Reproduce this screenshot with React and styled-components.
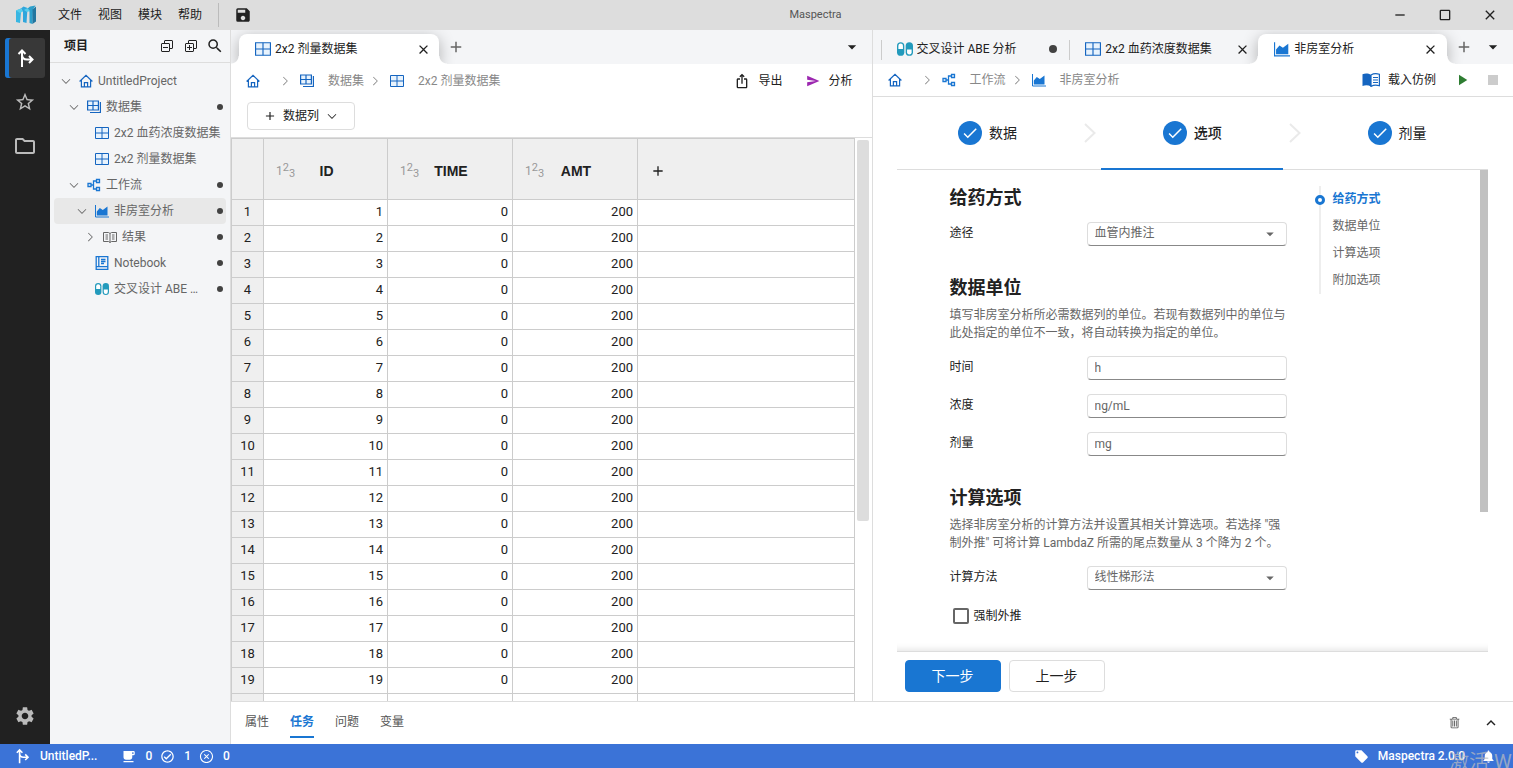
import React, { useState } from 'react';
import styled, { createGlobalStyle } from 'styled-components';
import {
  MdSave, MdStarBorder, MdOutlineFolder, MdSettings, MdSearch, MdClose, MdAdd, MdArrowDropDown,
  MdIosShare, MdPlayArrow, MdStop, MdCheck, MdLocalCafe, MdLocalOffer, MdNotifications,
  MdKeyboardArrowUp, MdRemove, MdCropSquare, MdSend, MdOutlineCheckCircle,
} from 'react-icons/md';
import { VscCollapseAll, VscExpandAll, VscChevronDown, VscChevronRight, VscTrash } from 'react-icons/vsc';
import { AiOutlineCloseCircle } from 'react-icons/ai';

const primary = '#1976d2';
const iconBlue = '#1565c0';
const textColor = '#212121';
const mutedColor = '#666';
const lineColor = '#ddd';
const panelColor = '#f4f5f7';

const GlobalStyle = createGlobalStyle`
*, *::before, *::after {
box-sizing: border-box;
}
body {
margin: 0;
overflow: hidden;
font-family: Roboto, "Noto Sans CJK SC", sans-serif;
font-size: 12px;
line-height: 18px;
color: ${textColor};
background-color: white;
}
button, input, select {
font: inherit;
color: inherit;
}
svg {
display: block;
flex: none;
}
a {
color: inherit;
text-decoration: none;
}
`;
const Page = styled.div`
height: 100vh;
display: flex;
flex-direction: column;
`;
const IconButton = styled.button`
display: flex;
align-items: center;
justify-content: center;
flex: none;
width: ${(p) => p.$w || 24}px;
height: 24px;
padding: 0;
border: 0;
background: none;
color: ${(p) => p.$color || textColor};
`;
const Spacer = styled.div`
flex: 1;
`;

const TitleBar = styled.header`
display: grid;
grid-template-columns: 1fr auto 1fr;
align-items: center;
height: 30px;
flex: none;
background-color: #ddd;
`;
const TitleLeft = styled.div`
display: flex;
align-items: center;
height: 30px;
padding-left: 15px;
`;
const MenuList = styled.nav`
display: flex;
gap: 16px;
margin: 0 16px 0 21px;
`;
const MenuButton = styled.button`
padding: 0;
border: 0;
background: none;
`;
const TitleDivider = styled.div`
width: 1px;
height: 24px;
margin-right: 12px;
background-color: #bbb;
`;
const AppTitle = styled.div`
color: #555;
font-size: 11px;
padding-left: 118px;
`;
const WindowControls = styled.div`
display: flex;
justify-content: flex-end;
gap: 21px;
padding-right: 11px;
`;

const Body = styled.div`
flex: 1;
min-height: 0;
display: flex;
`;
const Rail = styled.nav`
width: 50px;
flex: none;
display: flex;
flex-direction: column;
align-items: center;
gap: 4px;
padding: 8px 0;
background-color: #212121;
`;
const RailButton = styled.button`
width: 40px;
height: 40px;
display: flex;
align-items: center;
justify-content: center;
border: 0;
border-radius: 3px;
padding: 0;
color: ${(p) => (p.$active ? 'white' : '#bbb')};
background-color: ${(p) => (p.$active ? '#383838' : 'transparent')};
box-shadow: ${(p) => (p.$active ? `inset 4px 0 0 ${primary}` : 'none')};
`;
const Sidebar = styled.aside`
width: 181px;
flex: none;
background-color: ${panelColor};
border-right: 1px solid ${lineColor};
`;
const SidebarHeader = styled.div`
display: flex;
align-items: center;
height: 33px;
padding: 0 3px 0 14px;
border-bottom: 1px solid ${lineColor};
`;
const SidebarTitle = styled.h2`
flex: 1;
margin: 0;
font-size: 12px;
font-weight: 700;
`;
const Tree = styled.ul`
list-style: none;
margin: 0;
padding: 5px 4px;
`;
const TreeRow = styled.li`
display: flex;
align-items: center;
gap: 5px;
height: 26px;
padding: 0 3px 0 ${(p) => 4 + p.$level * 8}px;
border-radius: 4px;
color: ${mutedColor};
background-color: ${(p) => (p.$selected ? '#e8e8e8' : 'transparent')};
`;
const TreeToggle = styled.span`
width: 16px;
flex: none;
display: flex;
justify-content: center;
`;
const TreeLabel = styled.span`
flex: 1;
min-width: 0;
padding-right: ${(p) => (p.$cut ? 4 : 0)}px;
overflow: hidden;
text-overflow: ${(p) => (p.$cut ? 'ellipsis' : 'clip')};
white-space: nowrap;
`;
const Dot = styled.span`
width: ${(p) => p.$size || 6}px;
height: ${(p) => p.$size || 6}px;
flex: none;
border-radius: 50%;
background-color: #424242;
`;

const Work = styled.div`
flex: 1;
min-width: 0;
display: flex;
flex-direction: column;
`;
const Panes = styled.div`
flex: 1;
min-height: 0;
display: flex;
`;
const Pane = styled.section`
flex: 1;
min-width: 0;
display: flex;
flex-direction: column;
border-right: ${(p) => (p.$divided ? `1px solid ${lineColor}` : 'none')};
`;
const TabBar = styled.div`
display: flex;
align-items: flex-end;
height: 34px;
flex: none;
padding: 0 8px;
overflow: hidden;
background-color: ${panelColor};
`;
const TabItem = styled.div`
position: relative;
display: flex;
align-items: center;
gap: 4px;
flex: 0 1 200px;
min-width: 0;
height: 30px;
padding: 0 4px 0 16px;
border-radius: 8px 8px 0 0;
${(p) => (p.$active ? `
background-color: white;
box-shadow: 0 4px 16px rgba(0, 0, 0, 0.3);
&::before, &::after {
content: "";
position: absolute;
bottom: 0;
width: 8px;
height: 8px;
}
&::before {
left: -8px;
background: radial-gradient(circle at 0 0, transparent 7px, white 8px);
}
&::after {
right: -8px;
background: radial-gradient(circle at 100% 0, transparent 7px, white 8px);
}
` : `
&::before {
content: "";
position: absolute;
left: 0;
top: 6px;
width: 1px;
height: 20px;
background-color: #ccc;
}
`)}
`;
const TabLabel = styled.span`
flex: 1;
white-space: nowrap;
overflow: hidden;
`;
const TabMark = styled.span`
width: 24px;
flex: none;
display: flex;
justify-content: center;
`;
const TabActions = styled.div`
display: flex;
align-items: center;
align-self: center;
`;

const ToolRow = styled.div`
display: flex;
align-items: center;
height: 33px;
flex: none;
padding: 0 ${(p) => (p.$line ? 8 : 12)}px 0 15px;
border-bottom: ${(p) => (p.$line ? `1px solid ${lineColor}` : 'none')};
`;
const Crumbs = styled.nav`
display: flex;
align-items: center;
color: #888;
`;
const Crumb = styled.a`
display: flex;
align-items: center;
gap: 14px;
`;
const CrumbArrow = styled.span`
color: #888;
margin: 0 8px 0 ${(p) => (p.$first ? 18 : 4)}px;
`;
const ToolButton = styled.button`
display: flex;
align-items: center;
gap: 8px;
padding: 0;
margin: 0 7px 0 17px;
border: 0;
background: none;
`;
const ColumnBar = styled.div`
height: 41px;
flex: none;
padding: 5px 16px;
border-bottom: 1px solid ${lineColor};
`;
const ColumnButton = styled.button`
display: flex;
align-items: center;
justify-content: center;
gap: 6px;
width: 108px;
height: 28px;
border: 1px solid ${lineColor};
border-radius: 4px;
background-color: white;
`;

const GridArea = styled.div`
flex: 1;
min-height: 0;
display: flex;
overflow: hidden;
`;
const GridScroll = styled.div`
flex: 1;
min-width: 0;
overflow: hidden;
`;
const DataTable = styled.table`
width: 100%;
table-layout: fixed;
border-collapse: collapse;
font-size: 13px;
`;
const HeadCell = styled.th`
width: ${(p) => (p.$w ? `${p.$w}px` : 'auto')};
height: 61px;
padding: 4px 12px 0;
border: 1px solid #ccc;
background-color: #efefef;
font-family: "Liberation Sans", Arial, sans-serif;
font-size: 14px;
font-weight: 700;
text-align: left;
`;
const HeadContent = styled.div`
display: flex;
align-items: center;
`;
const HeadName = styled.span`
flex: 1;
padding-right: 16px;
text-align: center;
`;
const NumberType = styled.span`
color: #999;
font-family: Roboto, sans-serif;
font-size: 12px;
font-weight: 400;
line-height: 18px;
width: 18px;
white-space: nowrap;
`;
const Raised = styled.sup`
font-size: 11px;
line-height: 0;
vertical-align: 4px;
`;
const Lowered = styled.sub`
font-size: 11px;
line-height: 0;
vertical-align: -2px;
`;
const RowHead = styled.th`
height: 26px;
padding: 0 0 2px;
border: 1px solid #ccc;
background-color: #efefef;
font-weight: 400;
text-align: center;
`;
const Cell = styled.td`
height: 26px;
padding: 0 4px 2px;
border: 1px solid #ccc;
text-align: right;
`;
const ScrollTrack = styled.div`
width: ${(p) => p.$w}px;
flex: none;
padding: ${(p) => p.$pad || '0'};
`;
const ScrollThumb = styled.div`
height: ${(p) => p.$h};
border-radius: ${(p) => p.$r || 0}px;
background-color: ${(p) => p.$color};
`;

const Wizard = styled.div`
flex: 1;
min-height: 0;
display: flex;
flex-direction: column;
padding: 0 25px 0 24px;
`;
const Steps = styled.div`
display: flex;
align-items: center;
flex: none;
height: 73px;
border-bottom: 1px solid ${lineColor};
`;
const StepButton = styled.button`
flex: 1;
height: 73px;
display: flex;
align-items: center;
justify-content: center;
gap: 7px;
padding: 0;
border: 0;
background: none;
font-size: 14px;
font-weight: ${(p) => (p.$active ? 500 : 400)};
box-shadow: ${(p) => (p.$active ? `inset 0 -2px 0 ${primary}` : 'none')};
`;
const StepMark = styled.span`
width: 24px;
height: 24px;
display: flex;
align-items: center;
justify-content: center;
border-radius: 50%;
color: white;
background-color: ${primary};
`;
const StepGap = styled.span`
width: 23px;
display: flex;
justify-content: center;
`;
const FormArea = styled.div`
flex: 1;
min-height: 0;
display: flex;
overflow: hidden;
border-bottom: 1px solid #ddd;
box-shadow: inset 0 -8px 6px -6px rgba(0, 0, 0, 0.1);
`;
const FormScroll = styled.div`
flex: 1;
display: flex;
gap: 29px;
padding: 16px 0 0 53px;
`;
const Form = styled.form`
width: 340px;
display: flex;
flex-direction: column;
gap: 30px;
`;
const FormSection = styled.fieldset`
margin: 0;
padding: 0;
border: 0;
min-width: 0;
`;
const SectionTitle = styled.h3`
margin: 0 0 6px;
font-size: 18px;
font-weight: 700;
line-height: 24px;
`;
const SectionHelp = styled.p`
margin: 0;
color: ${mutedColor};
`;
const Fields = styled.div`
display: flex;
flex-direction: column;
gap: 14px;
padding-top: ${(p) => (p.$tight ? 6 : 14)}px;
`;
const FieldRow = styled.div`
display: flex;
height: 24px;
`;
const FieldLabel = styled.label`
width: 137px;
line-height: 22px;
`;
const FieldInput = styled.input`
width: 200px;
height: 24px;
padding: 0 7px;
border: 1px solid ${lineColor};
border-bottom-color: #888;
border-radius: 4px;
color: ${mutedColor};
background-color: white;
`;
const SelectBox = styled.div`
position: relative;
color: ${mutedColor};
svg {
position: absolute;
right: 8px;
top: 3px;
pointer-events: none;
}
`;
const FieldSelect = styled(FieldInput)`
appearance: none;
padding-bottom: 2px;
`;
const CheckLabel = styled.label`
display: flex;
align-items: center;
gap: 5px;
height: 24px;
padding-left: 3px;
`;
const Checkbox = styled.input`
appearance: none;
width: 16px;
height: 16px;
margin: 0;
border: 2px solid #666;
border-radius: 2px;
`;
const Anchors = styled.nav`
display: flex;
flex-direction: column;
align-self: flex-start;
border-left: 2px solid #eee;
`;
const AnchorLink = styled.a`
position: relative;
padding: 0 0 0 12px;
line-height: 27px;
color: ${(p) => (p.$active ? primary : mutedColor)};
font-weight: ${(p) => (p.$active ? 700 : 400)};
&::before {
content: "";
display: ${(p) => (p.$active ? 'block' : 'none')};
position: absolute;
left: -6px;
top: 9px;
width: 10px;
height: 10px;
border: 3px solid ${primary};
border-radius: 50%;
background-color: white;
}
`;
const WizardFooter = styled.div`
display: flex;
gap: 8px;
flex: none;
padding: 8px 8px 9px;
`;
const WizardButton = styled.button`
width: 96px;
height: 32px;
border: 1px solid ${(p) => (p.$primary ? primary : lineColor)};
border-radius: 4px;
font-size: 14px;
color: ${(p) => (p.$primary ? 'white' : textColor)};
background-color: ${(p) => (p.$primary ? primary : 'white')};
`;

const BottomPanel = styled.div`
display: flex;
align-items: center;
height: 43px;
flex: none;
padding: 0 4px 0 14px;
border-top: 1px solid ${lineColor};
`;
const BottomTabs = styled.div`
display: flex;
flex: 1;
gap: 21px;
`;
const BottomTab = styled.button`
height: 30px;
padding: 0;
border: 0;
border-bottom: 2px solid ${(p) => (p.$active ? primary : 'transparent')};
background: none;
color: ${(p) => (p.$active ? primary : '#555')};
font-weight: ${(p) => (p.$active ? 700 : 400)};
`;
const StatusBar = styled.footer`
position: relative;
display: flex;
align-items: center;
height: 24px;
flex: none;
padding: 0 17px 0 14px;
overflow: hidden;
color: white;
font-weight: 500;
background-color: #3b73d7;
`;
const StatusItem = styled.span`
display: flex;
align-items: center;
gap: ${(p) => p.$gap || 9}px;
margin-right: ${(p) => p.$space || 8}px;
`;
const Watermark = styled.div`
position: absolute;
right: 0;
top: 6px;
width: 64px;
overflow: hidden;
white-space: nowrap;
font-size: 20px;
font-weight: 400;
line-height: 24px;
color: rgba(190, 190, 190, 0.7);
pointer-events: none;
`;

const LogoIcon = () => (
  <svg width="22" height="20" viewBox="0 0 22 20">
    <path d="M1 5.500L6 3.500V7.500L5 18 1 17z" fill="#38b6e2" />
    <path d="M6 3.500L8.500 1.500 12.500 3 11.500 18 8 17V7z" fill="#2fa6dc" />
    <path d="M12 4l3-2.500 5.500-1L18 4.500l-.5 14.500-3-1V6.500z" fill="#2c9fcb" />
    <path d="M1 5.500L6 3.500 8 6.500 5 8zM9 5l3.500-2L15 6l-3 1z" fill="#56cdec" />
    <path d="M17.500 4.500l3.500-3v15L17.500 19z" fill="#23769f" />
  </svg>
);
const BranchIcon = ({ size = 20 }) => (
  <svg width={size} height={size} viewBox="0 0 20 20" fill="none" stroke="currentColor" strokeWidth="2">
    <path d="M7 19V3M3.500 6L7 2.500 10.500 6M7 6.500c0 3 2 5 5 5h5M14 8l3.500 3.500L14 15" />
  </svg>
);
const GridIcon = ({ size = 14 }) => (
  <svg width={size} height={size} viewBox="0 0 14 14" fill="none" stroke={iconBlue}>
    <path d="M.5 1.500h13v11H.5z" fill="#e8f3fd" />
    <path d="M7 1.500v11M.5 7h13" />
  </svg>
);
const GridsIcon = () => (
  <svg width="14" height="14" viewBox="0 0 14 14" fill="none" stroke={iconBlue} strokeWidth="1.200">
    <path d="M.6 1h10.800v9H.6z" fill="#e8f3fd" />
    <path d="M6 1v9M.6 5.500h10.800M3 12.500h10.400V2" />
  </svg>
);
const FlowIcon = () => (
  <svg width="14" height="14" viewBox="0 0 14 14" fill="none" stroke={primary} strokeWidth="1.300">
    <path d="M1 5.500h3v3H1zM9.500 1.500h3v3h-3zM9.500 9.500h3v3h-3zM4 7h2.500M9.500 3h-3v8h3" />
  </svg>
);
const AreaIcon = ({ size = 14 }) => (
  <svg width={size} height={size} viewBox="0 0 14 14">
    <path d="M.5 1v12H14" fill="none" stroke={primary} />
    <path d="M1.800 11.500V7.500l3-3.500 3 2 4.700-3.500v9z" fill={primary} />
  </svg>
);
const ResultIcon = () => (
  <svg width="14" height="14" viewBox="0 0 14 14" fill="none" stroke="#666">
    <path d="M.5 2.500h5L7 3.500l1.500-1h5v9h-5L7 12.500l-1.500-1h-5zM7 3.500v9M2.500 5H5M2.500 7H5M2.500 9H5M9 5h2.500M9 7h2.500M9 9h2.500" />
  </svg>
);
const ManualIcon = () => (
  <svg width="18" height="14" viewBox="0 0 18 14" fill={iconBlue}>
    <path d="M.5 1.200C3.500.2 6.500.4 9 2v11.500c-2.500-1.400-5.500-1.500-8.500-.6z" />
    <path d="M9 2c2.500-1.500 5.500-1.600 8.400-.7v11.500c-2.900-.9-5.900-.8-8.400.6z" fill="white" stroke={iconBlue} strokeWidth="1.200" />
    <path d="M11 4.500h5M11 7h5M11 9.500h5" stroke={iconBlue} strokeWidth="1.200" />
  </svg>
);
const NotebookIcon = () => (
  <svg width="14" height="14" viewBox="0 0 14 14" fill="none" stroke={primary} strokeWidth="1.300">
    <path d="M1.200 .7h11.600v12.600H1.200zM3.800 .7v10M1.200 10.700h11.600M6 3.500h4.500M6 5.500h4.500M6 7.500h3" />
  </svg>
);
const PillsIcon = ({ size = 14 }) => (
  <svg width={size} height={size} viewBox="0 0 14 14" fill="#229abc">
    <rect x="0" y="1" width="6.400" height="12" rx="3.200" />
    <path d="M1.200 7V4.200a2 2 0 014 0V7z" fill="white" />
    <rect x="7.600" y="1" width="6.400" height="12" rx="3.200" />
    <path d="M8.800 7.500v2.400a2 2 0 004 0V7.500z" fill="white" />
  </svg>
);
const HomeIcon = () => (
  <svg width="14" height="14" viewBox="0 0 14 14" fill="none" stroke={iconBlue} strokeWidth="1.200">
    <path d="M.6 7.500L7 1.300l6.400 6.200M2.400 6v6.900h9.200V6M5.400 12.900V8.600h3.200v4.300" />
  </svg>
);
const StepArrow = () => (
  <svg width="12" height="20" viewBox="0 0 12 20" fill="none" stroke="#eaeaea" strokeWidth="2">
    <path d="M1 1l9.500 9L1 19" />
  </svg>
);

const treeItems = [
  { label: 'UntitledProject', level: 0, icon: <HomeIcon />, toggle: 'open' },
  { label: '数据集', level: 1, icon: <GridsIcon />, toggle: 'open', dot: true },
  { label: '2x2 血药浓度数据集', level: 2, icon: <GridIcon /> },
  { label: '2x2 剂量数据集', level: 2, icon: <GridIcon /> },
  { label: '工作流', level: 1, icon: <FlowIcon />, toggle: 'open', dot: true },
  { label: '非房室分析', level: 2, icon: <AreaIcon />, toggle: 'open', dot: true, selected: true },
  { label: '结果', level: 3, icon: <ResultIcon />, toggle: 'closed', dot: true },
  { label: 'Notebook', level: 2, icon: <NotebookIcon />, dot: true },
  { label: '交叉设计 ABE 分析', level: 2, icon: <PillsIcon />, dot: true },
];
const columns = [
  { name: 'ID', width: 124 },
  { name: 'TIME', width: 125 },
  { name: 'AMT', width: 125 },
];
const rows = Array.from({ length: 20 }, (_, i) => ({ ID: i + 1, TIME: 0, AMT: 200 }));
const units = [
  { id: 'time', label: '时间', value: 'h' },
  { id: 'conc', label: '浓度', value: 'ng/mL' },
  { id: 'dose', label: '剂量', value: 'mg' },
];
const anchors = ['给药方式', '数据单位', '计算选项', '附加选项'];
const bottomTabs = ['属性', '任务', '问题', '变量'];

const Tab = ({ icon, label, active, dirty }) => (
  <TabItem $active={active}>
    {icon}
    <TabLabel>{label}</TabLabel>
    {dirty ? <TabMark><Dot $size={8} /></TabMark> : <IconButton aria-label="关闭"><MdClose size={15} /></IconButton>}
  </TabItem>
);

const SelectField = ({ id, label, value }) => (
  <FieldRow>
    <FieldLabel htmlFor={id}>{label}</FieldLabel>
    <SelectBox>
      <FieldSelect as="select" id={id} defaultValue={value}>
        <option>{value}</option>
      </FieldSelect>
      <MdArrowDropDown size={18} />
    </SelectBox>
  </FieldRow>
);

const ProjectTree = () => (
  <Sidebar>
    <SidebarHeader>
      <SidebarTitle>项目</SidebarTitle>
      <IconButton aria-label="全部折叠"><VscCollapseAll size={16} /></IconButton>
      <IconButton aria-label="全部展开"><VscExpandAll size={16} /></IconButton>
      <IconButton aria-label="搜索"><MdSearch size={18} /></IconButton>
    </SidebarHeader>
    <Tree>
      {treeItems.map((item) => (
        <TreeRow key={item.label} $level={item.level} $selected={item.selected}>
          <TreeToggle>
            {item.toggle === 'open' && <VscChevronDown size={14} />}
            {item.toggle === 'closed' && <VscChevronRight size={14} />}
          </TreeToggle>
          {item.icon}
          <TreeLabel $cut={item.dot}>{item.label}</TreeLabel>
          {item.dot && <Dot />}
        </TreeRow>
      ))}
    </Tree>
  </Sidebar>
);

const DatasetPane = () => (
  <Pane $divided>
    <TabBar>
      <Tab icon={<GridIcon size={16} />} label="2x2 剂量数据集" active />
      <TabActions>
        <IconButton $w={34} $color="#666" aria-label="新建"><MdAdd size={18} /></IconButton>
      </TabActions>
      <Spacer />
      <TabActions>
        <IconButton aria-label="更多"><MdArrowDropDown size={20} /></IconButton>
      </TabActions>
    </TabBar>
    <ToolRow>
      <Crumbs>
        <Crumb href="#home"><HomeIcon /></Crumb>
        <CrumbArrow $first><VscChevronRight size={14} /></CrumbArrow>
        <Crumb href="#datasets"><GridsIcon />数据集</Crumb>
        <CrumbArrow><VscChevronRight size={14} /></CrumbArrow>
        <Crumb href="#dose"><GridIcon />2x2 剂量数据集</Crumb>
      </Crumbs>
      <Spacer />
      <ToolButton><MdIosShare size={16} />导出</ToolButton>
      <ToolButton><MdSend size={14} color="#9c27b0" />分析</ToolButton>
    </ToolRow>
    <ColumnBar>
      <ColumnButton><MdAdd size={14} />数据列<VscChevronDown size={14} /></ColumnButton>
    </ColumnBar>
    <GridArea>
      <GridScroll>
        <DataTable>
          <thead>
            <tr>
              <HeadCell $w={32} />
              {columns.map((col) => (
                <HeadCell key={col.name} $w={col.width}>
                  <HeadContent>
                    <NumberType>1<Raised>2</Raised><Lowered>3</Lowered></NumberType>
                    <HeadName>{col.name}</HeadName>
                  </HeadContent>
                </HeadCell>
              ))}
              <HeadCell><IconButton $w={16} aria-label="添加列"><MdAdd size={16} /></IconButton></HeadCell>
            </tr>
          </thead>
          <tbody>
            {rows.map((row) => (
              <tr key={row.ID}>
                <RowHead>{row.ID}</RowHead>
                {columns.map((col) => <Cell key={col.name}>{row[col.name]}</Cell>)}
                <Cell />
              </tr>
            ))}
          </tbody>
        </DataTable>
      </GridScroll>
      <ScrollTrack $w={17} $pad="2px 3px 0 2px">
        <ScrollThumb $h="68%" $r={2} $color="#ddd" />
      </ScrollTrack>
    </GridArea>
  </Pane>
);

const AnalysisPane = () => (
  <Pane>
    <TabBar>
      <Tab icon={<PillsIcon size={16} />} label="交叉设计 ABE 分析" dirty />
      <Tab icon={<GridIcon size={16} />} label="2x2 血药浓度数据集" />
      <Tab icon={<AreaIcon size={16} />} label="非房室分析" active />
      <TabActions>
        <IconButton $w={34} $color="#666" aria-label="新建"><MdAdd size={18} /></IconButton>
        <IconButton aria-label="更多"><MdArrowDropDown size={20} /></IconButton>
      </TabActions>
    </TabBar>
    <ToolRow $line>
      <Crumbs>
        <Crumb href="#home"><HomeIcon /></Crumb>
        <CrumbArrow $first><VscChevronRight size={14} /></CrumbArrow>
        <Crumb href="#flow"><FlowIcon />工作流</Crumb>
        <CrumbArrow><VscChevronRight size={14} /></CrumbArrow>
        <Crumb href="#nca"><AreaIcon />非房室分析</Crumb>
      </Crumbs>
      <Spacer />
      <ToolButton><ManualIcon />载入仿例</ToolButton>
      <IconButton $w={38} $color="#2e7d32" aria-label="运行"><MdPlayArrow size={18} /></IconButton>
      <IconButton $color="#ccc" aria-label="停止"><MdStop size={20} /></IconButton>
    </ToolRow>
    <Wizard>
      <Steps>
        {['数据', '选项', '剂量'].map((step, i) => (
          <React.Fragment key={step}>
            {i > 0 && <StepGap><StepArrow /></StepGap>}
            <StepButton $active={i === 1}>
              <StepMark><MdCheck size={18} /></StepMark>
              {step}
            </StepButton>
          </React.Fragment>
        ))}
      </Steps>
      <FormArea>
        <FormScroll>
          <Form>
            <FormSection>
              <SectionTitle>给药方式</SectionTitle>
              <Fields $tight>
                <SelectField id="route" label="途径" value="血管内推注" />
              </Fields>
            </FormSection>
            <FormSection>
              <SectionTitle>数据单位</SectionTitle>
              <SectionHelp>填写非房室分析所必需数据列的单位。若现有数据列中的单位与此处指定的单位不一致，将自动转换为指定的单位。</SectionHelp>
              <Fields>
                {units.map((unit) => (
                  <FieldRow key={unit.id}>
                    <FieldLabel htmlFor={unit.id}>{unit.label}</FieldLabel>
                    <FieldInput id={unit.id} defaultValue={unit.value} />
                  </FieldRow>
                ))}
              </Fields>
            </FormSection>
            <FormSection>
              <SectionTitle>计算选项</SectionTitle>
              <SectionHelp>选择非房室分析的计算方法并设置其相关计算选项。若选择 "强制外推" 可将计算 LambdaZ 所需的尾点数量从 3 个降为 2 个。</SectionHelp>
              <Fields>
                <SelectField id="method" label="计算方法" value="线性梯形法" />
                <CheckLabel><Checkbox type="checkbox" />强制外推</CheckLabel>
              </Fields>
            </FormSection>
          </Form>
          <Anchors>
            {anchors.map((name, i) => (
              <AnchorLink key={name} href={`#${name}`} $active={i === 0}>{name}</AnchorLink>
            ))}
          </Anchors>
        </FormScroll>
        <ScrollTrack $w={8}>
          <ScrollThumb $h="71%" $color="#c1c1c1" />
        </ScrollTrack>
      </FormArea>
      <WizardFooter>
        <WizardButton $primary>下一步</WizardButton>
        <WizardButton>上一步</WizardButton>
      </WizardFooter>
    </Wizard>
  </Pane>
);

const App = () => {
  const [activeTab, setActiveTab] = useState('任务');

  return (
    <Page>
      <GlobalStyle />
      <TitleBar>
        <TitleLeft>
          <LogoIcon />
          <MenuList>
            {['文件', '视图', '模块', '帮助'].map((name) => <MenuButton key={name}>{name}</MenuButton>)}
          </MenuList>
          <TitleDivider />
          <IconButton aria-label="保存"><MdSave size={18} /></IconButton>
        </TitleLeft>
        <AppTitle>Maspectra</AppTitle>
        <WindowControls>
          <IconButton aria-label="最小化"><MdRemove size={16} /></IconButton>
          <IconButton aria-label="最大化"><MdCropSquare size={16} /></IconButton>
          <IconButton aria-label="关闭窗口"><MdClose size={16} /></IconButton>
        </WindowControls>
      </TitleBar>
      <Body>
        <Rail>
          <RailButton $active aria-label="项目"><BranchIcon /></RailButton>
          <RailButton aria-label="收藏"><MdStarBorder size={22} /></RailButton>
          <RailButton aria-label="文件夹"><MdOutlineFolder size={24} /></RailButton>
          <Spacer />
          <RailButton aria-label="设置"><MdSettings size={22} /></RailButton>
        </Rail>
        <ProjectTree />
        <Work>
          <Panes>
            <DatasetPane />
            <AnalysisPane />
          </Panes>
          <BottomPanel>
            <BottomTabs>
              {bottomTabs.map((name) => (
                <BottomTab key={name} $active={name === activeTab} onClick={() => setActiveTab(name)}>{name}</BottomTab>
              ))}
            </BottomTabs>
            <IconButton $w={36} $color="#555" aria-label="清空"><VscTrash size={14} /></IconButton>
            <IconButton $w={36} aria-label="展开"><MdKeyboardArrowUp size={18} /></IconButton>
          </BottomPanel>
        </Work>
      </Body>
      <StatusBar>
        <StatusItem $gap={10} $space={24}><BranchIcon size={16} />UntitledP...</StatusItem>
        <StatusItem><MdLocalCafe size={15} />0</StatusItem>
        <StatusItem><MdOutlineCheckCircle size={15} />1</StatusItem>
        <StatusItem><AiOutlineCloseCircle size={15} />0</StatusItem>
        <Spacer />
        <StatusItem $space={16}><MdLocalOffer size={15} />Maspectra 2.0.0</StatusItem>
        <MdNotifications size={15} />
        <Watermark>激活 W</Watermark>
      </StatusBar>
    </Page>
  );
};

export default App;
